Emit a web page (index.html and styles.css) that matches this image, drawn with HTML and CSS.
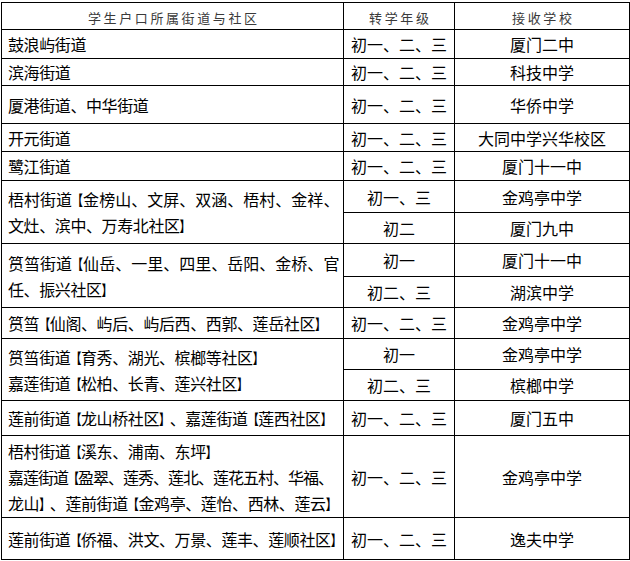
FILE: index.html
```html
<!DOCTYPE html>
<html lang="zh-CN">
<head>
<meta charset="utf-8">
<title>转学安排</title>
<link rel="stylesheet" href="styles.css">
</head>
<body>
<table class="grid">
  <colgroup><col class="c1"><col class="c2"><col class="c3"></colgroup>
  <thead>
    <tr class="h27 head"><th>学生户口所属街道与社区</th><th>转学年级</th><th>接收学校</th></tr>
  </thead>
  <tbody>
    <tr class="h29"><td class="area">鼓浪屿街道</td><td>初一、二、三</td><td>厦门二中</td></tr>
    <tr class="h27"><td class="area">滨海街道</td><td>初一、二、三</td><td>科技中学</td></tr>
    <tr class="h38"><td class="area">厦港街道、中华街道</td><td>初一、二、三</td><td>华侨中学</td></tr>
    <tr class="h28"><td class="area">开元街道</td><td>初一、二、三</td><td>大同中学兴华校区</td></tr>
    <tr class="h29"><td class="area">鹭江街道</td><td>初一、二、三</td><td>厦门十一中</td></tr>
    <tr class="h32"><td class="area" rowspan="2"><span class="jl">梧村街道<span class="bk">【</span>金榜山、文屏、双涵、梧村、金祥、</span><span class="ln">文灶、滨中、万寿北社区<span class="bk">】</span></span></td><td>初一、三</td><td>金鸡亭中学</td></tr>
    <tr class="h31"><td>初二</td><td>厦门九中</td></tr>
    <tr class="h33"><td class="area" rowspan="2"><span class="jl">筼筜街道<span class="bk">【</span>仙岳、一里、四里、岳阳、金桥、官</span><span class="ln">任、振兴社区<span class="bk">】</span></span></td><td>初一</td><td>厦门十一中</td></tr>
    <tr class="h31"><td>初二、三</td><td>湖滨中学</td></tr>
    <tr class="h31"><td class="area">筼筜<span class="bk">【</span>仙阁、屿后、屿后西、西郭、莲岳社区<span class="bk">】</span></td><td>初一、二、三</td><td>金鸡亭中学</td></tr>
    <tr class="h31"><td class="area" rowspan="2"><span class="ln">筼筜街道<span class="bk">【</span>育秀、湖光、槟榔等社区<span class="bk">】</span></span><span class="ln">嘉莲街道<span class="bk">【</span>松柏、长青、莲兴社区<span class="bk">】</span></span></td><td>初一</td><td>金鸡亭中学</td></tr>
    <tr class="h31"><td>初二、三</td><td>槟榔中学</td></tr>
    <tr class="h35"><td class="area">莲前街道<span class="bk">【</span>龙山桥社区<span class="bk">】</span>、嘉莲街道<span class="bk">【</span>莲西社区<span class="bk">】</span></td><td>初一、二、三</td><td>厦门五中</td></tr>
    <tr class="h82"><td class="area"><span class="ln">梧村街道<span class="bk">【</span>溪东、浦南、东坪<span class="bk">】</span></span><span class="ln tight">嘉莲街道<span class="bk">【</span>盈翠、莲秀、莲北、莲花五村、华福、</span><span class="ln">龙山<span class="bk">】</span>、莲前街道<span class="bk">【</span>金鸡亭、莲怡、西林、莲云<span class="bk">】</span></span></td><td>初一、二、三</td><td>金鸡亭中学</td></tr>
    <tr class="h42"><td class="area">莲前街道<span class="bk">【</span>侨福、洪文、万景、莲丰、莲顺社区<span class="bk">】</span></td><td>初一、二、三</td><td>逸夫中学</td></tr>
  </tbody>
</table>
</body>
</html>
```

FILE: styles.css
```css
html, body {
  margin: 0;
  padding: 0;
  background: #ffffff;
}

body {
  padding: 2px 0 0 1px;
  font-family: "Noto Sans CJK SC", "Noto Sans", sans-serif;
  color: #000000;
}

.grid {
  border-collapse: collapse;
  table-layout: fixed;
  width: 628px;
  text-spacing-trim: space-all;
  font-kerning: none;
}

.c1 { width: 342px; }
.c2 { width: 111px; }
.c3 { width: 175px; }

.grid th,
.grid td {
  border: 1px solid #000000;
  padding: 0;
  text-align: center;
  vertical-align: middle;
  font-size: 16px;
  line-height: 26px;
  font-weight: normal;
  white-space: nowrap;
  overflow: hidden;
}

.grid th {
  font-size: 13px;
  letter-spacing: 2.6px;
  padding-left: 2.6px;
  padding-top: 3px;
  line-height: 20px;
  color: #3a3a3a;
}

.grid td.area {
  text-align: left;
  padding: 0 4px 0 6px;
  letter-spacing: -0.4px;
}

.ln {
  display: block;
}

.jl {
  display: block;
  text-align: justify;
  text-align-last: justify;
}

.tight {
  letter-spacing: -1px;
}

.bk {
  display: inline-block;
  font-size: 11px;
  line-height: 11px;
  font-weight: bold;
  vertical-align: 1px;
  transform: scaleY(1.3);
}

.h27 { height: 27px; }
.h28 { height: 28px; }
.h29 { height: 29px; }
.h31 { height: 31px; }
.h32 { height: 32px; }
.h33 { height: 33px; }
.h35 { height: 35px; }
.h38 { height: 38px; }
.h42 { height: 42px; }
.h82 { height: 82px; }
```
